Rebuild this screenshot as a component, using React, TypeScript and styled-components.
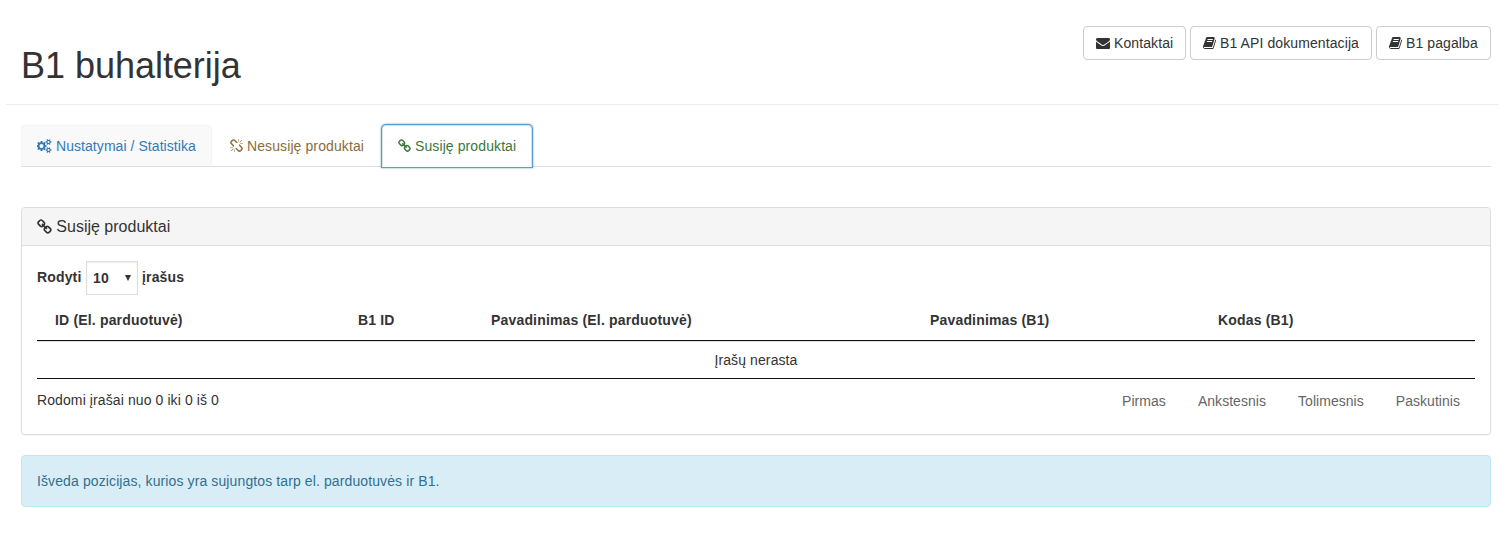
import React from 'react';
import styled, { createGlobalStyle } from 'styled-components';

const GlobalStyle = createGlobalStyle`
  *, *::before, *::after { box-sizing: border-box; }
  body {
    margin: 0;
    background: #fff;
    color: #333;
    font: 14px/20px "Liberation Sans", Arial, sans-serif;
    letter-spacing: 0.1px;
  }
`;

const icons = {
  envelope: {
    box: '0 0 1792 1792',
    width: 14,
    d: 'M1792 710v794q0 66-47 113t-113 47h-1472q-66 0-113-47t-47-113v-794q44 49 101 87 362 246 497 345 57 42 92.500 65.500t94.500 48 110 24.500h2q51 0 110-24.500t94.500-48 92.500-65.500q170-123 498-345 57-39 100-87zm0-294q0 79-49 151t-122 123q-376 261-468 325-10 7-42.500 30.500t-54 38-52 32.500-57.500 27-50 9h-2q-23 0-50-9t-57.500-27-52-32.500-54-38-42.500-30.500q-91-64-262-182.500t-205-142.500q-62-42-117-115.500t-55-136.500q0-78 41.500-130t118.500-52h1472q65 0 112.500 47t47.500 113z',
  },
  book: {
    box: '64 0 1664 1792',
    width: 13,
    d: 'M1703 478q40 57 18 129l-275 906q-19 64-76.500 107.500t-122.500 43.500h-923q-77 0-148.500-53.500t-99.500-131.500q-24-67-2-127 0-4 3-27t4-37q1-8-3-21.500t-3-19.500q2-11 8-21t16.500-23.500 16.500-23.500q23-38 45-91.500t30-91.500q3-10 .5-30t-.5-28q3-11 17-28t17-23q21-36 42-92t25-90q1-9-2.500-32t.5-28q4-13 22-30.500t22-22.500q19-26 42.500-84.500t27.500-96.500q1-8-3-25.500t-2-26.500q2-8 9-18t18-23 17-21q8-12 16.500-30.500t15-35 16-36 19.500-32 26.500-23.500 36-11.500 47.500 5.500l-1 3q38-9 51-9h761q74 0 114 56t18 130l-274 906q-36 119-71.500 153.500t-128.500 34.500h-869q-27 0-38 15-11 16-1 43 24 70 144 70h923q29 0 56-15.500t35-41.500l300-987q7-22 5-57 38 15 59 43zm-1064 2q-4 13 2 22.500t20 9.500h608q13 0 25.500-9.500t16.500-22.500l21-64q4-13-2-22.500t-20-9.500h-608q-13 0-25.500 9.500t-16.500 22.500zm-83 256q-4 13 2 22.500t20 9.500h608q13 0 25.500-9.500t16.500-22.500l21-64q4-13-2-22.500t-20-9.500h-608q-13 0-25.500 9.500t-16.500 22.500z',
  },
  chain: {
    box: '64 0 1664 1792',
    width: 13,
    d: 'M1520 1216q0-40-28-68l-208-208q-28-28-68-28-42 0-72 32 3 3 19 18.500t21.500 21.500 15 19 13 25.500 3.500 27.500q0 40-28 68t-68 28q-15 0-27.500-3.500t-25.500-13-19-15-21.500-21.500-18.500-19q-33 31-33 73 0 40 28 68l206 207q27 27 68 27 40 0 68-26l147-146q28-28 28-67zm-703-705q0-40-28-68l-206-207q-28-28-68-28-39 0-68 27l-147 146q-28 28-28 67 0 40 28 68l208 208q27 27 68 27 42 0 72-31-3-3-19-18.500t-21.500-21.500-15-19-13-25.500-3.500-27.500q0-40 28-68t68-28q15 0 27.500 3.500t25.500 13 19 15 21.500 21.500 18.500 19q33-31 33-73zm895 705q0 120-85 203l-147 146q-83 83-203 83-121 0-204-85l-206-207q-83-83-83-203 0-123 88-209l-88-88q-86 88-208 88-120 0-204-84l-208-208q-84-84-84-204t85-203l147-146q83-83 203-83 121 0 204 85l206 207q83 83 83 203 0 123-88 209l88 88q86-88 208-88 120 0 204 84l208 208q84 84 84 204z',
  },
  unlink: {
    box: '64 0 1664 1792',
    width: 13,
    d: 'M503 1271l-256 256q-10 9-23 9-12 0-23-9-9-10-9-23t9-23l256-256q10-9 23-9t23 9q9 10 9 23t-9 23zm169 41v320q0 14-9 23t-23 9-23-9-9-23v-320q0-14 9-23t23-9 23 9 9 23zm-224-224q0 14-9 23t-23 9h-320q-14 0-23-9t-9-23 9-23 23-9h320q14 0 23 9t9 23zm1264 128q0 120-85 203l-147 146q-83 83-203 83-121 0-204-85l-334-335q-21-21-42-56l239-18 273 274q28 28 68 27.500t68-27.500l147-146q28-28 28-67 0-40-28-68l-274-275 18-239q35 21 56 42l336 336q84 86 84 204zm-617-724l-239 18-273-274q-28-28-68-28-39 0-68 27l-147 146q-28 28-28 67 0 40 28 68l274 274-18 240q-35-21-56-42l-336-336q-84-86-84-204 0-120 85-203l147-146q83-83 203-83 121 0 204 85l334 335q21 21 42 56zm633 84q0 14-9 23t-23 9h-320q-14 0-23-9t-9-23 9-23 23-9h320q14 0 23 9t9 23zm-544-544v320q0 14-9 23t-23 9-23-9-9-23v-320q0-14 9-23t23-9 23 9 9 23zm407 151l-256 256q-11 9-23 9t-23-9q-9-10-9-23t9-23l256-256q10-9 23-9t23 9q9 10 9 23t-9 23z',
  },
  cogs: {
    box: '0 0 1920 1792',
    width: 15,
    d: 'M832 896q0-106-75-181t-181-75-181 75-75 181 75 181 181 75 181-75 75-181zm768 512q0-52-38-90t-90-38-90 38-38 90q0 53 37.500 90.500t90.500 37.500 90.500-37.500 37.500-90.500zm0-1024q0-52-38-90t-90-38-90 38-38 90q0 53 37.500 90.500t90.500 37.500 90.500-37.500 37.500-90.500zm-384 421v185q0 10-7 19.500t-16 10.500l-155 24q-11 35-32 76 34 48 90 115 7 11 7 20 0 12-7 19-23 30-82.500 89.500t-78.500 59.500q-11 0-21-7l-115-90q-37 19-77 31-11 108-23 155-7 24-30 24h-186q-11 0-20-7.500t-10-17.500l-23-153q-34-10-75-31l-118 89q-7 7-20 7-11 0-21-8-144-133-144-160 0-9 7-19 10-14 41-53t47-61q-23-44-35-82l-152-24q-10-1-17-9.500t-7-19.500v-185q0-10 7-19.500t16-10.500l155-24q11-35 32-76-34-48-90-115-7-11-7-20 0-12 7-20 22-30 82-89t79-59q11 0 21 7l115 90q34-18 77-32 11-108 23-154 7-24 30-24h186q11 0 20 7.500t10 17.500l23 153q34 10 75 31l118-89q8-7 20-7 11 0 21 8 144 133 144 160 0 8-7 19-12 16-42 54t-45 60q23 48 34 82l152 23q10 2 17 10.500t7 19.500zm640 533v140q0 16-149 31-12 27-30 52 51 113 51 138 0 4-4 7-122 71-124 71-8 0-46-47t-52-68q-20 2-30 2t-30-2q-14 21-52 68t-46 47q-2 0-124-71-4-3-4-7 0-25 51-138-18-25-30-52-149-15-149-31v-140q0-16 149-31 13-29 30-52-51-113-51-138 0-4 4-7 4-2 35-20t59-34 30-16q8 0 46 46.500t52 67.500q20-2 30-2t30 2q51-71 92-112l6-2q4 0 124 70 4 3 4 7 0 25-51 138 17 23 30 52 149 15 149 31zm0-1024v140q0 16-149 31-12 27-30 52 51 113 51 138 0 4-4 7-122 71-124 71-8 0-46-47t-52-68q-20 2-30 2t-30-2q-14 21-52 68t-46 47q-2 0-124-71-4-3-4-7 0-25 51-138-18-25-30-52-149-15-149-31v-140q0-16 149-31 13-29 30-52-51-113-51-138 0-4 4-7 4-2 35-20t59-34 30-16q8 0 46 46.500t52 67.500q20-2 30-2t30 2q51-71 92-112l6-2q4 0 124 70 4 3 4 7 0 25-51 138 17 23 30 52 149 15 149 31z',
  },
};

type IconName = keyof typeof icons;

const IconSvg = styled.svg`
  display: block;
  flex: none;
  fill: currentColor;
`;

const Icon = ({ name, size = 14 }: { name: IconName; size?: number }) => (
  <IconSvg viewBox={icons[name].box} width={(icons[name].width * size) / 14} height={size} aria-hidden="true">
    <path d={icons[name].d} />
  </IconSvg>
);

const Header = styled.header`
  display: flex;
  justify-content: space-between;
  align-items: flex-start;
  height: 105px;
  margin-left: 6px;
  padding: 26px 8px 0 15px;
  border-bottom: 1px solid #eee;
`;

const Title = styled.h1`
  margin: 20px 0 0;
  font-size: 36px;
  font-weight: 400;
  line-height: 40px;
  letter-spacing: -0.03px;
`;

const Actions = styled.div`
  display: flex;
  gap: 4px;
`;

const Button = styled.button<{ $width: number }>`
  display: flex;
  align-items: center;
  gap: 4px;
  width: ${(p) => p.$width}px;
  height: 34px;
  padding: 0 12px;
  border: 1px solid #ccc;
  border-radius: 4px;
  background: #fff;
  color: #333;
  font: inherit;
  letter-spacing: inherit;
  white-space: nowrap;
`;

const Content = styled.main`
  margin: 20px 8px 0 21px;
`;

const Tabs = styled.nav`
  display: flex;
  gap: 2px;
  height: 42px;
  border-bottom: 1px solid #ddd;
`;

const tabTones = { primary: '#337ab7', warning: '#8a6d3b', success: '#3c763d' };

const Tab = styled.a<{ $tone: keyof typeof tabTones; $width: number; $state?: 'hover' | 'active' }>`
  display: flex;
  align-items: center;
  gap: 4px;
  width: ${(p) => p.$width}px;
  height: 42px;
  padding: 0 15px;
  border: 1px solid transparent;
  border-radius: 4px 4px 0 0;
  color: ${(p) => tabTones[p.$tone]};
  white-space: nowrap;
  ${(p) => p.$state === 'hover' && 'background: #f9f9f9; border-color: #f4f4f4 #f4f4f4 #ddd; letter-spacing: 0.06px;'}
  ${(p) =>
    p.$state === 'active' &&
    'background: #fff; border-color: #ddd #ddd transparent; box-shadow: 0 0 0 1px #5b9dd9, 0 0 2px 1px rgba(30, 140, 190, 0.8);'}
`;

const Panel = styled.section`
  height: 228px;
  margin-top: 40px;
  border: 1px solid #ddd;
  border-radius: 4px;
  box-shadow: 0 1px 1px rgba(0, 0, 0, 0.05);
`;

const PanelTitle = styled.h3`
  display: flex;
  align-items: center;
  gap: 4.5px;
  height: 38px;
  margin: 0;
  padding: 0 15px;
  border-bottom: 1px solid #ddd;
  border-radius: 3px 3px 0 0;
  background: #f5f5f5;
  font-size: 16px;
  font-weight: 400;
  letter-spacing: 0;
`;

const PanelBody = styled.div`
  padding: 15px;
`;

const LengthLabel = styled.label`
  display: flex;
  align-items: center;
  gap: 4px;
  height: 34px;
  font-weight: 700;
`;

const LabelText = styled.span<{ $width?: number }>`
  width: ${(p) => (p.$width ? `${p.$width}px` : 'auto')};
  margin-top: -2px;
  letter-spacing: 0.15px;
`;

const SelectBox = styled.span`
  display: flex;
  align-items: center;
  justify-content: space-between;
  width: 52px;
  height: 34px;
  padding: 0 6px;
  border: 1px solid #ddd;
  box-shadow: inset 0 1px 2px rgba(0, 0, 0, 0.07);
  letter-spacing: 0.3px;
`;

const Arrow = styled.svg`
  width: 6px;
  height: 6px;
  fill: #333;
`;

const Table = styled.table`
  width: 100%;
  margin-top: 5px;
  table-layout: fixed;
  border-collapse: separate;
  border-spacing: 0;
  border-bottom: 1px solid #111;
`;

const HeadCell = styled.th<{ $width: number }>`
  width: ${(p) => p.$width}px;
  height: 41px;
  padding: 0 18px;
  border-bottom: 1px solid #111;
  text-align: left;
  letter-spacing: 0.17px;
`;

const EmptyCell = styled.td`
  height: 37px;
  padding: 0;
  border-top: 1px solid #ddd;
  text-align: center;
`;

const Footer = styled.div`
  display: flex;
  justify-content: space-between;
  padding: 11px 15px 0 0;
`;

const Pager = styled.div`
  display: flex;
  gap: 32px;
  padding-top: 1px;
  color: #666;
  letter-spacing: 0.04px;
`;

const Alert = styled.div`
  height: 52px;
  margin-top: 20px;
  padding: 15px;
  border: 1px solid #bce8f1;
  border-radius: 4px;
  background: #d9edf7;
  color: #31708f;
  letter-spacing: 0.11px;
`;

const columns = [
  { label: 'ID (El. parduotuvė)', width: 303 },
  { label: 'B1 ID', width: 133 },
  { label: 'Pavadinimas (El. parduotuvė)', width: 439 },
  { label: 'Pavadinimas (B1)', width: 288 },
  { label: 'Kodas (B1)', width: 275 },
];

export default function App() {
  return (
    <>
      <GlobalStyle />
      <Header>
        <Title>B1 buhalterija</Title>
        <Actions>
          <Button $width={103}><Icon name="envelope" /><span>Kontaktai</span></Button>
          <Button $width={182}><Icon name="book" /><span>B1 API dokumentacija</span></Button>
          <Button $width={115}><Icon name="book" /><span>B1 pagalba</span></Button>
        </Actions>
      </Header>
      <Content>
        <Tabs>
          <Tab $tone="primary" $width={191} $state="hover"><Icon name="cogs" /><span>Nustatymai / Statistika</span></Tab>
          <Tab $tone="warning" $width={166}><Icon name="unlink" /><span>Nesusiję produktai</span></Tab>
          <Tab $tone="success" $width={150} $state="active"><Icon name="chain" /><span>Susiję produktai</span></Tab>
        </Tabs>
        <Panel>
          <PanelTitle><Icon name="chain" size={16} /><span>Susiję produktai</span></PanelTitle>
          <PanelBody>
            <LengthLabel>
              <LabelText $width={45}>Rodyti</LabelText>
              <SelectBox>
                <span>10</span>
                <Arrow viewBox="0 0 6 6"><path d="M0 0h6L3 6z" /></Arrow>
              </SelectBox>
              <LabelText>įrašus</LabelText>
            </LengthLabel>
            <Table>
              <thead>
                <tr>{columns.map((c) => <HeadCell key={c.label} $width={c.width}>{c.label}</HeadCell>)}</tr>
              </thead>
              <tbody>
                <tr><EmptyCell colSpan={5}>Įrašų nerasta</EmptyCell></tr>
              </tbody>
            </Table>
            <Footer>
              <span>Rodomi įrašai nuo 0 iki 0 iš 0</span>
              <Pager>
                <span>Pirmas</span>
                <span>Ankstesnis</span>
                <span>Tolimesnis</span>
                <span>Paskutinis</span>
              </Pager>
            </Footer>
          </PanelBody>
        </Panel>
        <Alert>Išveda pozicijas, kurios yra sujungtos tarp el. parduotuvės ir B1.</Alert>
      </Content>
    </>
  );
}
